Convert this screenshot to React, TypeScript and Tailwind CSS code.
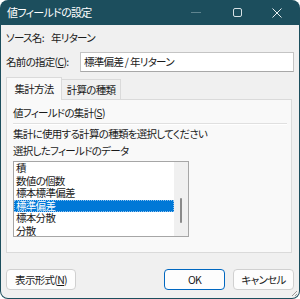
import React from "react";

const font = { fontFamily: '"Noto Sans CJK JP", "Noto Sans", sans-serif', fontFeatureSettings: '"palt"' };

export default function App() {
  const items = ["積", "数値の個数", "標本標準偏差", "標準偏差", "標本分散", "分散"];
  return (
    <div className="w-[300px] h-[299px] bg-white text-[10.5px] tracking-[-0.7px] text-[#1a1a1a] whitespace-nowrap" style={font}>
      <div className="w-[300px] h-[299px] rounded-[8px] bg-[#1c4e5d] px-[1px] pb-[1px] flex flex-col overflow-hidden">
        {/* title bar */}
        <div className="h-[25px] flex items-center pl-[6px] text-white text-[11px] relative">
          <span>値フィールドの設定</span>
          <div className="ml-auto flex items-center h-full">
            <div className="w-[46px] h-full flex items-center justify-center">
              <div className="w-[10px] h-[1px] bg-[#5f8590]" />
            </div>
            <div className="w-[36px] h-full flex items-center justify-center">
              <div className="w-[9px] h-[9px] border border-[#d8e2e5] rounded-[2px]" />
            </div>
            <div className="w-[44px] h-full flex items-center justify-center">
              <svg width="10" height="10" viewBox="0 0 10 10">
                <path d="M0.5 0.5 L9.5 9.5 M9.5 0.5 L0.5 9.5" stroke="#e6eef0" strokeWidth="1" />
              </svg>
            </div>
          </div>
        </div>
        {/* body */}
        <div className="flex-1 bg-[#f0f0f0] rounded-b-[7px] pl-[5px] pr-[5px] flex flex-col relative">
          <div className="mt-[5px] h-[16px] flex items-center">
            <span className="w-[45px]">ソース名:</span>
            <span>年リターン</span>
          </div>
          <div className="mt-[6px] h-[20px] flex items-center">
            <span className="w-[74px]">
              名前の指定(<span className="underline">C</span>):
            </span>
            <div className="flex-1 h-[20px] bg-white border border-[#c4c4c4] border-b-[#a8a8a8] flex items-center pl-[3px]">
              標準偏差 / 年リターン
            </div>
          </div>
          {/* tabs */}
          <div className="mt-[5px] h-[23px] flex items-end relative z-10">
            <div className="h-[23px] w-[56px] bg-[#f9f9f9] border border-[#dadada] border-b-0 flex items-center justify-center">
              集計方法
            </div>
            <div className="h-[21px] w-[59px] bg-[#f0f0f0] border border-[#dadada] border-l-0 border-b-[#dadada] flex items-center justify-center">
              計算の種類
            </div>
          </div>
          <div className="-mt-[1px] h-[154px] mr-[2px] bg-[#f9f9f9] border border-[#dadada] pl-[6px] pr-[4px] flex flex-col">
            <div className="mt-[5px] h-[16px] flex items-center">
              値フィールドの集計(<span className="underline">S</span>)
            </div>
            <div className="mt-[2px] h-[2px] border-t border-[#e0e0e0] border-b border-b-white" />
            <div className="mt-[1px] h-[16px] flex items-center">集計に使用する計算の種類を選択してください</div>
            <div className="mt-[1px] h-[16px] flex items-center">選択したフィールドのデータ</div>
            <div className="mt-[2px] w-[176px] h-[76px] border border-[#a6a6a6] bg-white flex text-[10.5px]">
              <div className="flex-1 flex flex-col pt-[0px]">
                {items.map((it) => (
                  <div
                    key={it}
                    className={
                      it === "標準偏差"
                        ? "h-[12.5px] leading-[12.5px] pl-[2px] bg-[#0078d7] text-white outline outline-1 outline-dotted outline-[#8fc2ef] -outline-offset-1"
                        : "h-[12.5px] leading-[12.5px] pl-[2px]"
                    }
                  >
                    {it}
                  </div>
                ))}
              </div>
              <div className="w-[14px] bg-[#f0f0f0] flex justify-center">
                <div className="mt-[36px] w-[2px] h-[25px] rounded-full bg-[#8a8a8a]" />
              </div>
            </div>
          </div>
          {/* buttons */}
          <div className="mt-[16px] h-[21px] flex items-center">
            <button className="h-[21px] w-[70px] bg-[#fdfdfd] border border-[#d0d0d0] rounded-[4px] flex items-center justify-center">
              表示形式(<span className="underline">N</span>)
            </button>
            <button className="ml-auto h-[21px] w-[61px] bg-[#fdfdfd] border border-[#0067c0] rounded-[4px] flex items-center justify-center">
              OK
            </button>
            <button className="ml-[8px] h-[21px] w-[61px] bg-[#fdfdfd] border border-[#d0d0d0] rounded-[4px] flex items-center justify-center">
              キャンセル
            </button>
          </div>
          <svg className="absolute right-[1px] bottom-[1px]" width="8" height="8" viewBox="0 0 8 8">
            <path d="M7 2 L2 7 M7 5 L5 7" stroke="#9a9a9a" strokeWidth="1" />
          </svg>
        </div>
      </div>
    </div>
  );
}
